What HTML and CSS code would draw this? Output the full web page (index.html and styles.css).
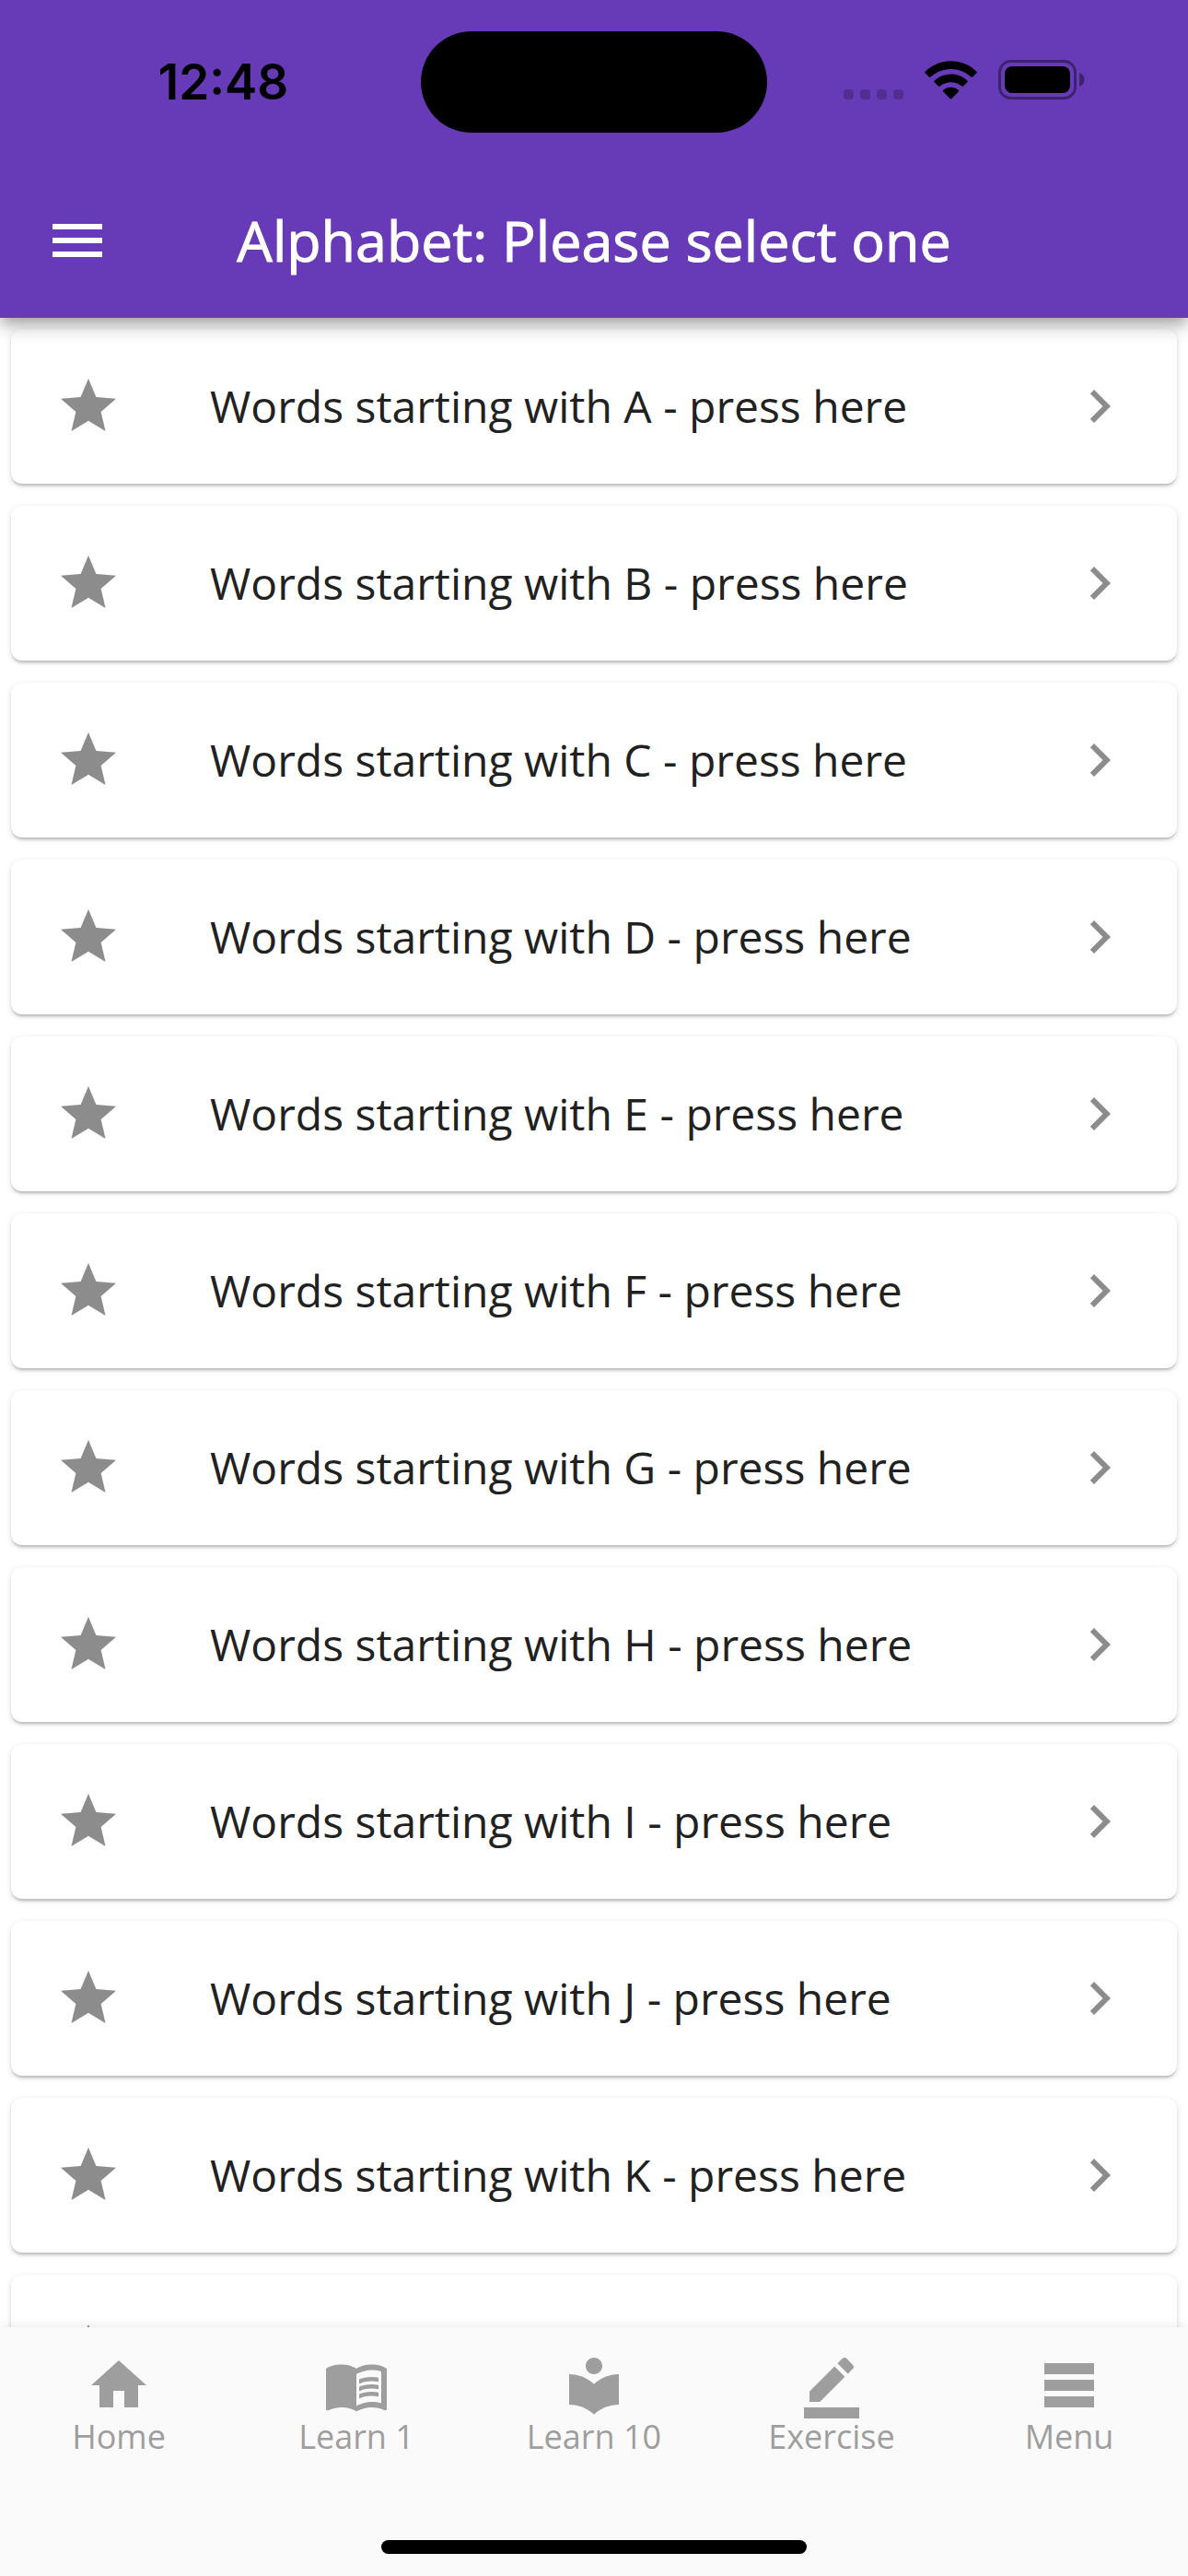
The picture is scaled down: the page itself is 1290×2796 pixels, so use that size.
FILE: index.html
```html
<!DOCTYPE html>
<html lang="en">
<head>
  <meta charset="UTF-8">
  <meta name="viewport" content="width=device-width, initial-scale=1.0">
  <title>Alphabet</title>
  <link rel="stylesheet" href="styles.css">
</head>
<body>
  <svg class="sprite" aria-hidden="true">
    <symbol id="star" viewBox="0 0 24 24">
      <path d="M12 17.27L18.18 21l-1.64-7.03L22 9.24l-7.19-.61L12 2 9.19 8.63 2 9.24l5.46 4.73L5.82 21z"/>
    </symbol>
    <symbol id="chevron" viewBox="0 0 24 24">
      <path d="M10 6L8.59 7.41 13.17 12l-4.58 4.59L10 18l6-6z"/>
    </symbol>
  </svg>

  <div class="app">
    <header class="header">
      <div class="status-bar">
        <span class="time">12:48</span>
        <div class="island"></div>
        <div class="status-icons">
          <svg class="signal" viewBox="0 0 65 11">
            <rect width="11" height="11" rx="4"/>
            <rect x="18" width="11" height="11" rx="4"/>
            <rect x="36" width="11" height="11" rx="4"/>
            <rect x="54" width="11" height="11" rx="4"/>
          </svg>
          <svg class="wifi" viewBox="0 0 58 42">
            <path d="M29 0C40 0 50 4.3 57.3 11.5Q58 12.5 57.2 13.3L53 17.5Q52.2 18.2 51.4 17.5C45.5 12 37.5 8.8 29 8.8S12.5 12 6.6 17.5Q5.8 18.2 5 17.5L.8 13.3Q0 12.5.7 11.5C8 4.3 18 0 29 0z"/>
            <path d="M29 14.5c7 0 13.3 2.6 18.1 7q.9.9 0 1.8l-4.3 4.3q-.8.8-1.7 0C37.9 24.8 33.6 23.2 29 23.2s-8.9 1.6-12.1 4.4q-.9.8-1.7 0l-4.3-4.3q-.9-.9 0-1.8c4.8-4.4 11.1-7 18.1-7z"/>
            <path d="M29 28.8c3.2 0 6.2 1.2 8.4 3.1q.9.9 0 1.8l-7.5 7.7q-.9.9-1.8 0l-7.5-7.7q-.9-.9 0-1.8c2.2-1.9 5.2-3.1 8.4-3.1z"/>
          </svg>
          <svg class="battery" viewBox="0 0 94 43">
            <rect class="battery-case" x="1.5" y="1.5" width="82" height="40" rx="12"/>
            <rect x="7" y="7" width="71" height="29" rx="8"/>
            <path class="battery-tip" d="M88 14c3.5 1.5 5.5 4.3 5.500 7.500s-2 6-5.500 7.500z"/>
          </svg>
        </div>
      </div>
      <div class="toolbar">
        <button class="menu-button" aria-label="Open menu">
          <svg class="icon" viewBox="0 0 24 24"><path d="M3 18h18v-2H3v2zm0-5h18v-2H3v2zm0-7v2h18V6H3z"/></svg>
        </button>
        <h1>Alphabet: Please select one</h1>
      </div>
    </header>

    <main class="content">
      <ul class="word-list"></ul>
    </main>

    <footer class="footer">
      <nav class="tabs">
        <a class="tab" href="#home">
          <svg class="icon" viewBox="0 0 24 24"><path d="M10 20v-6h4v6h5v-8h3L12 3 2 12h3v8z"/></svg>
          <span>Home</span>
        </a>
        <a class="tab" href="#learn-1">
          <svg class="icon" viewBox="0 0 24 24">
            <path d="M21 5c-1.11-.35-2.33-.5-3.5-.5-1.95 0-4.05.4-5.5 1.5-1.45-1.1-3.55-1.5-5.5-1.5S2.45 4.9 1 6v14.65c0 .25.25.5.5.5.1 0 .15-.05.25-.05C3.1 20.45 5.05 20 6.5 20c1.95 0 4.05.4 5.5 1.5 1.35-.85 3.8-1.5 5.5-1.5 1.65 0 3.35.3 4.75 1.05.1.05.15.05.25.05.25 0 .5-.25.5-.5V6c-.6-.45-1.25-.75-2-1zm0 13.5c-1.1-.35-2.3-.5-3.5-.5-1.7 0-4.15.65-5.5 1.5V8c1.35-.85 3.8-1.5 5.5-1.5 1.2 0 2.4.15 3.5.5v11.5z"/>
            <path d="M17.5 10.5c.88 0 1.73.09 2.5.26V9.24c-.79-.15-1.64-.24-2.5-.24-1.7 0-3.24.29-4.5.83v1.66c1.13-.64 2.7-.99 4.5-.99zM13 12.49v1.66c1.13-.64 2.7-.99 4.5-.99.88 0 1.73.09 2.5.26V11.9c-.79-.15-1.64-.24-2.5-.24-1.7 0-3.24.3-4.5.83zM17.5 14.33c-1.7 0-3.24.29-4.5.83v1.66c1.13-.64 2.7-.99 4.5-.99.88 0 1.73.09 2.5.26v-1.52c-.79-.16-1.64-.24-2.5-.24z"/>
          </svg>
          <span>Learn 1</span>
        </a>
        <a class="tab" href="#learn-10">
          <svg class="icon" viewBox="0 0 24 24"><path d="M12 11.55C9.64 9.35 6.48 8 3 8v11c3.48 0 6.64 1.35 9 3.55 2.36-2.19 5.52-3.55 9-3.55V8c-3.48 0-6.64 1.35-9 3.55zM12 8c1.66 0 3-1.34 3-3s-1.34-3-3-3-3 1.34-3 3 1.34 3 3 3z"/></svg>
          <span>Learn 10</span>
        </a>
        <a class="tab" href="#exercise">
          <svg class="icon" viewBox="0 0 24 24"><path d="M22 24H2v-4h20v4zM13.06 5.19l3.75 3.75L7.75 18H4v-3.75l9.06-9.06zm4.82 2.68l-3.75-3.75 1.83-1.83c.39-.39 1.02-.39 1.41 0l2.34 2.34c.39.39.39 1.02 0 1.41l-1.83 1.83z"/></svg>
          <span>Exercise</span>
        </a>
        <a class="tab" href="#menu">
          <svg class="icon" viewBox="0 0 24 24"><path d="M3 4h18v4H3zM3 10h18v4H3zM3 16h18v4H3z"/></svg>
          <span>Menu</span>
        </a>
      </nav>
      <div class="home-indicator"></div>
    </footer>
  </div>

  <script>
    const list = document.querySelector(".word-list");

    // One card per letter, the last one runs under the tab bar
    "ABCDEFGHIJKL".split("").forEach((letter) => {
      const li = document.createElement("li");
      li.innerHTML = `
        <a class="card" href="#${letter}">
          <svg class="icon"><use href="#star"></use></svg>
          <span class="card-title">Words starting with ${letter} - press here</span>
          <svg class="icon"><use href="#chevron"></use></svg>
        </a>
      `;
      list.appendChild(li);
    });
  </script>
</body>
</html>
```
FILE: styles.css
```css
/* General Styles */
* {
  box-sizing: border-box;
}

body {
  font-family: 'Open Sans', sans-serif;
  background: #fff;
  margin: 0;
  color: #212121;
}

.sprite {
  display: none;
}

.app {
  display: flex;
  flex-direction: column;
  height: 100vh;
}

.icon {
  display: block;
  flex: none;
  width: 72px;
  height: 72px;
  fill: currentColor;
}

/* Header */
.header {
  position: relative;
  z-index: 1;
  background: #673ab7;
  box-shadow: 0 6px 12px -3px rgba(0, 0, 0, 0.2), 0 12px 15px rgba(0, 0, 0, 0.14), 0 3px 30px rgba(0, 0, 0, 0.12);
}

.status-bar {
  display: grid;
  grid-template-columns: 1fr 376px 1fr;
  align-items: center;
  height: 177px;
}

.time {
  font-family: Inter, sans-serif;
  font-size: 53px;
  font-weight: 600;
  color: #000;
  text-align: center;
  padding-left: 28px;
}

.island {
  height: 110px;
  border-radius: 55px;
  background: #000;
}

.status-icons {
  display: flex;
  align-items: flex-end;
  justify-content: flex-end;
  gap: 23px;
  padding: 0 112px 4px 0;
}

.signal {
  width: 65px;
  height: 11px;
  opacity: 0.2;
}

.wifi {
  width: 57px;
  height: 42px;
}

.battery {
  width: 94px;
  height: 43px;
}

.battery-case {
  fill: none;
  stroke: #000;
  stroke-width: 3;
  opacity: 0.4;
}

.battery-tip {
  opacity: 0.4;
}

.toolbar {
  display: grid;
  grid-template-columns: 72px 1fr 72px;
  align-items: center;
  height: 168px;
  padding: 0 48px;
}

.menu-button {
  padding: 0;
  border: none;
  background: none;
  color: #fff;
  cursor: pointer;
}

h1 {
  margin: 0;
  font-size: 61px;
  font-weight: 500;
  line-height: 72px;
  text-align: center;
  color: #fff;
  -webkit-text-stroke: 1px #fff;
}

/* Word list */
.content {
  flex: 1;
  min-height: 0;
  overflow: hidden;
}

.word-list {
  display: flex;
  flex-direction: column;
  gap: 24px;
  list-style: none;
  margin: 0;
  padding: 12px;
}

.card {
  display: flex;
  align-items: center;
  height: 168px;
  padding: 0 48px;
  border-radius: 12px;
  background: #fff;
  box-shadow: 0 3px 3px -1px rgba(0, 0, 0, 0.2), 0 2px 6px rgba(0, 0, 0, 0.14);
  color: #8c8c8c;
  text-decoration: none;
}

.card-title {
  flex: 1;
  padding-left: 96px;
  font-size: 48px;
  line-height: 72px;
  color: #212121;
}

/* Bottom tabs */
.footer {
  position: relative;
  z-index: 1;
  background: #fafafa;
  box-shadow: 0 0 12px rgba(0, 0, 0, 0.1);
}

.tabs {
  display: grid;
  grid-template-columns: repeat(5, 1fr);
  padding-top: 27px;
}

.tab {
  display: flex;
  flex-direction: column;
  align-items: center;
  font-size: 36px;
  line-height: 40px;
  color: #9e9e9e;
  text-decoration: none;
}

.home-indicator {
  width: 462px;
  height: 15px;
  margin: 92px auto 24px;
  border-radius: 8px;
  background: #000;
}
```
